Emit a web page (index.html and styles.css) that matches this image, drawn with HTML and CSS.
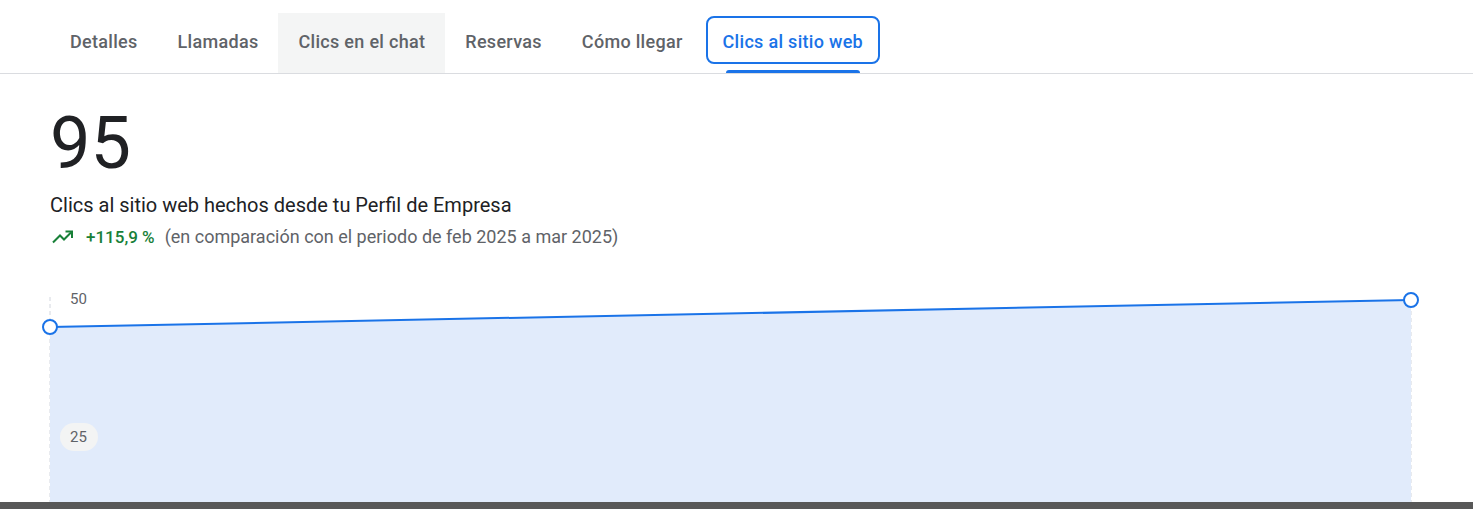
FILE: index.html
```html
<!DOCTYPE html>
<html lang="es">
<head>
  <meta charset="UTF-8">
  <title>Clics al sitio web</title>
  <link rel="stylesheet" href="styles.css">
</head>
<body>
  <nav class="tabs">
    <div class="tab">Detalles</div>
    <div class="tab">Llamadas</div>
    <div class="tab hover">Clics en el chat</div>
    <div class="tab">Reservas</div>
    <div class="tab">Cómo llegar</div>
    <div class="tab active">Clics al sitio web</div>
  </nav>

  <section class="summary">
    <div class="total">95</div>
    <div class="caption">Clics al sitio web hechos desde tu Perfil de Empresa</div>
    <div class="trend">
      <svg class="trend-icon" width="22" height="14" viewBox="0 0 22 14">
        <path d="M1 12.5 L8 5.5 L12 9.5 L19 2.5" fill="none" stroke="#188038" stroke-width="2"/>
        <path d="M13.5 1.5 H20 V8" fill="none" stroke="#188038" stroke-width="2"/>
      </svg>
      <span class="delta">+115,9 %</span>
      <span class="compare">(en comparación con el periodo de feb 2025 a mar 2025)</span>
    </div>
  </section>

  <div class="chart">
    <svg width="1473" height="217" viewBox="0 0 1473 217">
      <line x1="50" y1="6" x2="50" y2="217" stroke="#d2d6de" stroke-dasharray="4 3"/>
      <line x1="1411" y1="6" x2="1411" y2="217" stroke="#d2d6de" stroke-dasharray="4 3"/>
      <polygon points="50,36 1411,9 1411,217 50,217" fill="#e1ebfb"/>
      <line x1="50" y1="36" x2="1411" y2="9" stroke="#1a73e8" stroke-width="2"/>
      <circle cx="50" cy="36" r="7" fill="#fff" stroke="#1a73e8" stroke-width="2"/>
      <circle cx="1411" cy="9" r="7" fill="#fff" stroke="#1a73e8" stroke-width="2"/>
      <text x="70" y="13" class="axis">50</text>
      <rect x="60" y="132" width="38" height="28" rx="14" fill="#f3f4f4"/>
      <text x="70" y="151" class="axis">25</text>
    </svg>
  </div>

  <div class="taskbar"></div>
</body>
</html>
```

FILE: styles.css
```css
body {
  margin: 0;
  font-family: Roboto, "Liberation Sans", sans-serif;
  color: #202124;
  background: #fff;
  overflow: hidden;
}
.tabs {
  display: flex;
  height: 60px;
  padding: 13px 0 0 50px;
  border-bottom: 1px solid #dadce0;
}
.tab {
  position: relative;
  display: flex;
  align-items: center;
  padding: 0 20px 3px;
  font-size: 18px;
  font-weight: 500;
  letter-spacing: 0.3px;
  color: #5f6368;
}
.tab.hover {
  background: #f4f5f5;
}
.tab.active {
  color: #1a73e8;
}
.tab.active::before {
  content: "";
  position: absolute;
  top: 3px;
  left: 3px;
  right: 3px;
  bottom: 9px;
  border: 2px solid #1a73e8;
  border-radius: 8px;
}
.tab.active::after {
  content: "";
  position: absolute;
  left: 23px;
  right: 23px;
  bottom: 0;
  height: 3px;
  background: #1a73e8;
  border-radius: 3px 3px 0 0;
}
.summary {
  padding: 28px 0 0 50px;
}
.total {
  font-size: 72px;
  line-height: 84px;
  color: #202124;
}
.caption {
  margin-top: 4px;
  font-size: 20px;
  line-height: 30px;
}
.trend {
  display: flex;
  align-items: center;
  margin-top: 4px;
  font-size: 18px;
  line-height: 26px;
}
.trend-icon {
  margin: 0 12px 0 2px;
}
.delta {
  color: #188038;
  font-size: 17px;
  font-weight: 500;
  margin-right: 10px;
}
.compare {
  color: #5f6368;
}
.chart {
  margin-top: 41px;
}
.chart svg {
  display: block;
}
.axis {
  font-family: Roboto, "Liberation Sans", sans-serif;
  font-size: 15px;
  fill: #5f6368;
}
.taskbar {
  position: fixed;
  left: 0;
  right: 0;
  bottom: 0;
  height: 7px;
  background: #585858;
}
```
